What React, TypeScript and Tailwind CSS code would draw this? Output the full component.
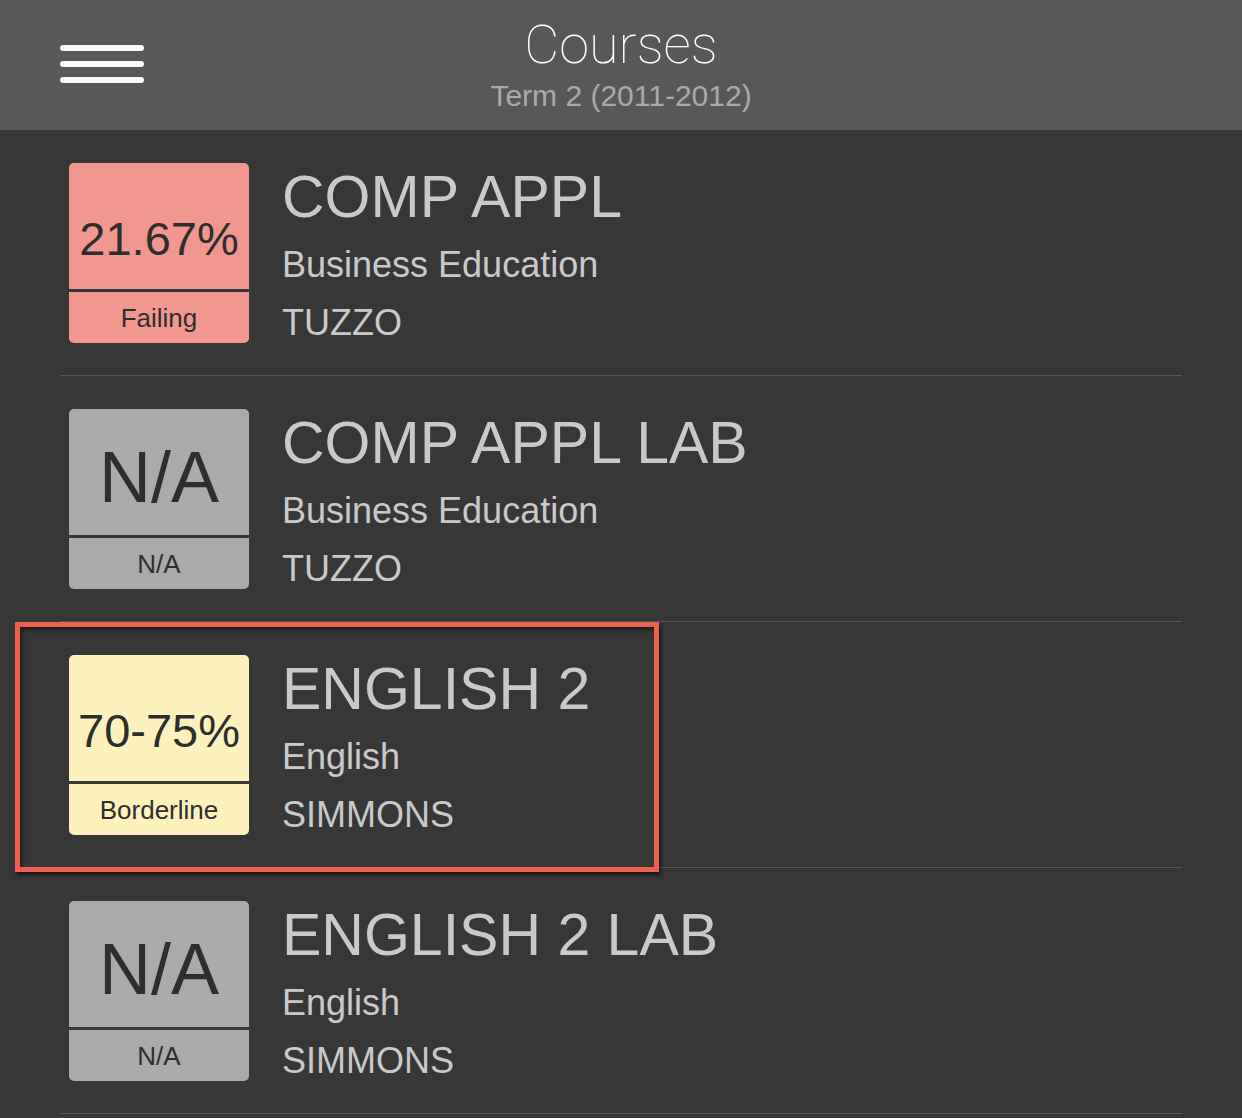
import React from "react";

type Course = {
  grade: string;
  label: string;
  tone: "fail" | "border" | "na";
  title: string;
  dept: string;
  teacher: string;
  highlight?: boolean;
};

const courses: Course[] = [
  { grade: "21.67%", label: "Failing", tone: "fail", title: "COMP APPL", dept: "Business Education", teacher: "TUZZO" },
  { grade: "N/A", label: "N/A", tone: "na", title: "COMP APPL LAB", dept: "Business Education", teacher: "TUZZO" },
  { grade: "70-75%", label: "Borderline", tone: "border", title: "ENGLISH 2", dept: "English", teacher: "SIMMONS", highlight: true },
  { grade: "N/A", label: "N/A", tone: "na", title: "ENGLISH 2 LAB", dept: "English", teacher: "SIMMONS" },
];

function GradeBox({ c }: { c: Course }) {
  const bg =
    c.tone === "fail" ? "bg-[#f2978f]" : c.tone === "border" ? "bg-[#fdf2bd]" : "bg-[#aaaaaa]";
  const isNA = c.tone === "na";
  return (
    <div className="flex w-[180px] shrink-0 flex-col gap-[3px]">
      <div
        className={`${bg} flex h-[126px] items-center justify-center rounded-t-[5px] ${isNA ? "pt-[10px]" : "pt-[24px]"}`}
      >
        <span
          className={`${isNA ? "text-[72px]" : "text-[47px]"} leading-none text-[#2e2e2e]`}
        >
          {c.grade}
        </span>
      </div>
      <div className={`${bg} flex h-[51px] items-center justify-center rounded-b-[5px]`}>
        <span className="text-[26px] leading-none text-[#2e2e2e]">{c.label}</span>
      </div>
    </div>
  );
}

export default function App() {
  return (
    <div
      className="min-h-[1118px] w-full bg-[#373737]"
      style={{ fontFamily: '"Liberation Sans", Arial, sans-serif' }}
    >
      <header className="grid h-[130px] grid-cols-[1fr_auto_1fr] bg-[#585858]">
        <div className="pl-[60px] pt-[45px]">
          <div className="flex w-[84px] flex-col gap-[10px]">
            <span className="block h-[6px] rounded-full bg-white" />
            <span className="block h-[6px] rounded-full bg-white" />
            <span className="block h-[6px] rounded-full bg-white" />
          </div>
        </div>
        <div className="flex flex-col items-center pt-[18px]">
          <div
            className="text-[54px] font-thin leading-none text-white"
            style={{ fontFamily: 'Roboto, "Liberation Sans", sans-serif' }}
          >
            Courses
          </div>
          <div className="mt-[9px] text-[30px] leading-none text-[#a9a9a9]">Term 2 (2011-2012)</div>
        </div>
        <div />
      </header>

      <div className="flex flex-col">
        {courses.map((c, i) => (
          <div key={i} className="relative">
            <div className="flex items-start gap-[33px] pb-[32px] pl-[69px] pt-[33px]">
              <GradeBox c={c} />
              <div className="flex h-[180px] flex-col text-[#c9c9c9]">
                <div className="text-[59px] leading-[68px]">{c.title}</div>
                <div className="mt-[5px] text-[36px] leading-[58px]">{c.dept}</div>
                <div className="text-[36px] leading-[58px]">{c.teacher}</div>
              </div>
            </div>
            <div className="ml-[60px] h-px w-[1122px] bg-[#575757]" />
            {c.highlight && (
              <div className="pointer-events-none absolute left-[15px] top-0 h-[250px] w-[644px] border-[5px] border-[#ee5f4f] shadow-[2px_3px_4px_rgba(0,0,0,0.6),inset_2px_3px_4px_rgba(0,0,0,0.5)]" />
            )}
          </div>
        ))}
      </div>
    </div>
  );
}
